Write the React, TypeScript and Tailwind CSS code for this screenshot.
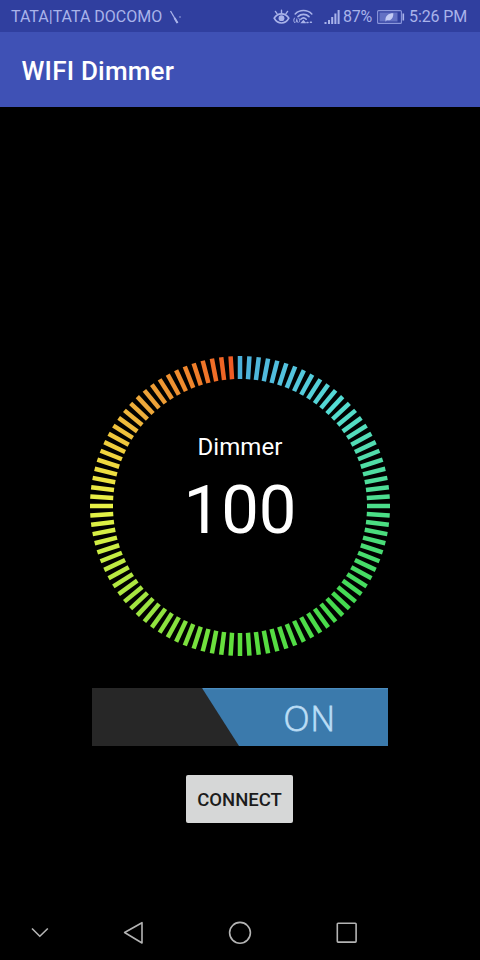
import React from 'react';

const TICK_COUNT = 100;

// Colour stops around the dial, clockwise from the top
const STOPS: { at: number; rgb: [number, number, number] }[] = [
  { at: 0, rgb: [76, 176, 218] },
  { at: 6, rgb: [84, 196, 222] },
  { at: 12, rgb: [84, 220, 212] },
  { at: 18, rgb: [82, 220, 176] },
  { at: 25, rgb: [76, 222, 140] },
  { at: 37, rgb: [68, 218, 80] },
  { at: 50, rgb: [92, 222, 60] },
  { at: 62, rgb: [156, 228, 64] },
  { at: 75, rgb: [232, 242, 70] },
  { at: 81, rgb: [240, 212, 62] },
  { at: 88, rgb: [238, 168, 58] },
  { at: 94, rgb: [240, 134, 44] },
  { at: 100, rgb: [240, 84, 34] },
];

const tickColor = (index: number) => {
  const next = Math.max(1, STOPS.findIndex((stop) => stop.at >= index));
  const from = STOPS[next - 1];
  const to = STOPS[next];
  const t = (index - from.at) / (to.at - from.at);
  const [r, g, b] = from.rgb.map((c, i) => Math.round(c + (to.rgb[i] - c) * t));
  return `rgb(${r}, ${g}, ${b})`;
};

const StatusBar: React.FC = () => (
  <div className="flex h-8 shrink-0 items-center bg-[#303f9f] pl-[11px] pr-[14px] pt-px text-[16px] text-[#a9b3ea]">
    <span className="w-[151px] whitespace-nowrap">TATA|TATA DOCOMO</span>
    <svg className="ml-[7px] h-4 w-3" viewBox="0 0 12 16" fill="none" stroke="currentColor">
      <path d="M1.5 2L8.5 14" strokeWidth="1.3" />
      <path d="M5.5 9L8.5 14" strokeWidth="2" />
      <path d="M11 7.2v1.6" strokeWidth="1" />
    </svg>

    <div className="ml-auto flex items-center">
      {/* Eye comfort */}
      <svg className="h-4 w-[17px]" viewBox="0 0 17 16" fill="none" stroke="currentColor" strokeLinecap="round">
        <path d="M1.2 9.2C3 6 5.5 4.8 8.5 4.8S14 6 15.8 9.2C14 12.6 11.5 14 8.5 14S3 12.6 1.2 9.2z" strokeWidth="1.7" />
        <circle cx="8.5" cy="9.2" r="2.9" fill="currentColor" stroke="none" />
        <path d="M8.5 4V1.2M4 4.6L2.4 2.4M13 4.6L14.6 2.4" strokeWidth="1.4" />
      </svg>
      {/* Wi-Fi */}
      <svg className="ml-[3px] h-4 w-5" viewBox="0 0 20 16" fill="none" stroke="currentColor" strokeLinecap="round">
        <path d="M2.2 5C6.5 0.4 14.5 0.4 18.8 5" strokeWidth="1.6" />
        <path d="M5 7.6C8 4.6 13 4.6 16 7.6" strokeWidth="1.6" />
        <path d="M7.8 10.2C9.4 8.6 11.6 8.6 13.2 10.2" strokeWidth="1.6" />
        <path d="M1.5 9C0.5 10.5 0.5 12 1.5 13.5M6 9.5C7 11 7 12 6 13.2M3.8 10v1.4M3 13.2L3.8 11.2L4.6 13.2" strokeWidth="1" />
        <path d="M9 13.6L10.4 12L11.8 13.6zM14 13.6h1M17.4 13.2h1" strokeWidth="1.5" />
      </svg>
      {/* Signal */}
      <svg className="ml-[11px] h-4 w-4" viewBox="0 0 16 16" fill="currentColor">
        <rect x="0.5" y="13" width="2" height="2" />
        <rect x="4" y="11" width="2" height="4" />
        <rect x="7.2" y="8" width="2" height="7" />
        <rect x="10.4" y="4.5" width="2" height="10.5" />
        <rect x="13.6" y="1" width="2" height="14" />
      </svg>
      <span className="ml-[3px] w-[29px] whitespace-nowrap tracking-[-0.3px]">87%</span>
      {/* Battery */}
      <svg className="ml-[5px] h-4 w-7" viewBox="0 0 28 16" fill="none">
        <rect x="0.6" y="1.6" width="23.8" height="12.8" rx="1" stroke="#8b97dc" strokeWidth="1.1" />
        <rect x="2.5" y="3.5" width="18" height="9" fill="#6371c4" />
        <path d="M8.5 11.8C8 6.8 11.5 4.3 16.3 4.3C16.5 8.8 14 12.5 9.8 11L8.8 12.8z" fill="#c3cbf4" />
        <rect x="25.5" y="4.5" width="1.6" height="7" fill="#a9b3ea" />
      </svg>
      <span className="ml-1 w-[57px] whitespace-nowrap tracking-[-0.1px]">5:26 PM</span>
    </div>
  </div>
);

const Dial: React.FC<{ label: string; value: number }> = ({ label, value }) => (
  <div className="grid h-[300px] w-[300px] place-items-center">
    <svg className="col-start-1 row-start-1 h-[300px] w-[300px]" viewBox="-150 -150 300 300">
      {Array.from({ length: TICK_COUNT }, (_, i) => (
        <rect
          key={i}
          x="-2.25"
          y="-150"
          width="4.5"
          height="23"
          fill={tickColor(i)}
          transform={`rotate(${(i * 360) / TICK_COUNT})`}
        />
      ))}
    </svg>
    <div className="col-start-1 row-start-1 flex flex-col items-center pb-[33px] text-white">
      <span className="text-[24px] leading-8 tracking-[0.1px]">{label}</span>
      <span className="mt-[8px] text-[67px] leading-[78px]">{value}</span>
    </div>
  </div>
);

const PowerSwitch: React.FC = () => (
  <button className="grid h-[58px] w-[296px] bg-[#272727]" aria-label="Power">
    <svg className="col-start-1 row-start-1 h-[58px] w-[296px]" viewBox="0 0 296 58">
      <path d="M110 0H296V58H147z" fill="#3b7aac" />
      <path d="M111 0.7H296" stroke="#4f90c4" strokeWidth="1" />
    </svg>
    <span className="col-start-1 row-start-1 self-center justify-self-end pr-[52px] pt-px font-['Open_Sans',sans-serif] text-[34px] font-light leading-10 tracking-[1px] text-[#c3e3fa] [-webkit-text-stroke:0.8px_#b4d8f2]">
      ON
    </span>
  </button>
);

const NavigationBar: React.FC = () => (
  <svg className="h-14 w-[480px] shrink-0" viewBox="0 0 480 56" fill="none" stroke="#b4b4b4" strokeWidth="1.6" strokeLinejoin="round">
    <path d="M32 24.5L39.8 32.3L47.8 24.5" />
    <path d="M124.6 28.5L142 18.7V39z" />
    <circle cx="240" cy="28.8" r="10.4" />
    <rect x="337.3" y="19.3" width="18.8" height="18.8" rx="0.8" />
  </svg>
);

const App: React.FC = () => {
  return (
    <div className="flex h-[960px] w-[480px] flex-col overflow-hidden bg-black font-[Roboto,sans-serif]">
      <StatusBar />

      <header className="flex h-[75px] shrink-0 items-center bg-[#3f51b5] px-[21.5px] pt-[3px]">
        <h1 className="text-[26px] font-medium leading-none tracking-[0.2px] text-white">WIFI Dimmer</h1>
      </header>

      <main className="flex flex-1 flex-col items-center pt-[249px]">
        <Dial label="Dimmer" value={100} />
        <div className="mt-8">
          <PowerSwitch />
        </div>
        <button className="mr-px mt-[29px] h-12 w-[107px] rounded-[2px] bg-[#d6d7d7] pt-[3px] text-[18.5px] font-medium text-[#1c1c1c]">
          CONNECT
        </button>
      </main>

      <NavigationBar />
    </div>
  );
};

export default App;
